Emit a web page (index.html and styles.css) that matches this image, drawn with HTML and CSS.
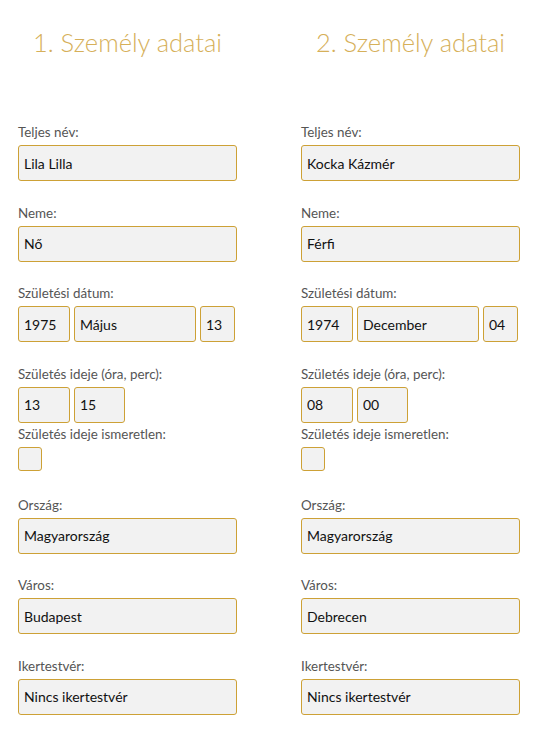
FILE: index.html
```html
<!DOCTYPE html>
<html lang="hu">
<head>
    <meta charset="UTF-8">
    <meta name="viewport" content="width=device-width, initial-scale=1.0">
    <title>Személy adatai</title>
    <link rel="stylesheet" href="styles.css">
</head>
<body>
    <div class="persons">
        <div class="person">
            <h2>1. Személy adatai</h2>

            <div class="field">
                <label>Teljes név:</label>
                <input type="text" value="Lila Lilla">
            </div>
            <div class="field">
                <label>Neme:</label>
                <input type="text" value="Nő">
            </div>
            <div class="field">
                <label>Születési dátum:</label>
                <div class="row">
                    <input type="text" class="year" value="1975">
                    <input type="text" class="month" value="Május">
                    <input type="text" class="day" value="13">
                </div>
            </div>
            <div class="field field-time">
                <label>Születés ideje (óra, perc):</label>
                <div class="row">
                    <input type="text" class="year" value="13">
                    <input type="text" class="minute" value="15">
                </div>
            </div>
            <div class="field field-check">
                <label>Születés ideje ismeretlen:</label>
                <span class="check"></span>
            </div>
            <div class="field">
                <label>Ország:</label>
                <input type="text" value="Magyarország">
            </div>
            <div class="field">
                <label>Város:</label>
                <input type="text" value="Budapest">
            </div>
            <div class="field">
                <label>Ikertestvér:</label>
                <input type="text" value="Nincs ikertestvér">
            </div>
        </div>

        <div class="person">
            <h2>2. Személy adatai</h2>

            <div class="field">
                <label>Teljes név:</label>
                <input type="text" value="Kocka Kázmér">
            </div>
            <div class="field">
                <label>Neme:</label>
                <input type="text" value="Férfi">
            </div>
            <div class="field">
                <label>Születési dátum:</label>
                <div class="row">
                    <input type="text" class="year" value="1974">
                    <input type="text" class="month" value="December">
                    <input type="text" class="day" value="04">
                </div>
            </div>
            <div class="field field-time">
                <label>Születés ideje (óra, perc):</label>
                <div class="row">
                    <input type="text" class="year" value="08">
                    <input type="text" class="minute" value="00">
                </div>
            </div>
            <div class="field field-check">
                <label>Születés ideje ismeretlen:</label>
                <span class="check"></span>
            </div>
            <div class="field">
                <label>Ország:</label>
                <input type="text" value="Magyarország">
            </div>
            <div class="field">
                <label>Város:</label>
                <input type="text" value="Debrecen">
            </div>
            <div class="field">
                <label>Ikertestvér:</label>
                <input type="text" value="Nincs ikertestvér">
            </div>
        </div>
    </div>
</body>
</html>
```

FILE: styles.css
```css
body {
    margin: 0;
    background-color: #fff;
    font-family: Lato, "Noto Sans", sans-serif;
    color: #222;
}

.persons {
    display: grid;
    grid-template-columns: 219px 219px;
    column-gap: 64px;
    padding-left: 18px;
}

.person h2 {
    margin: 27px 0 67px;
    font-size: 25.5px;
    line-height: 30px;
    font-weight: 300;
    text-align: center;
    color: #d6b05a;
}

.field {
    margin-bottom: 23.5px;
}

.field-time {
    margin-bottom: 3px;
}

.field-check {
    margin-bottom: 26px;
}

.field label {
    display: block;
    font-size: 13.4px;
    line-height: 16px;
    margin-bottom: 5px;
    color: #555;
}

.field input {
    display: block;
    width: 100%;
    height: 36px;
    box-sizing: border-box;
    padding: 0 5px;
    border: 1px solid #cda136;
    border-radius: 3px;
    background-color: #f2f2f2;
    font-family: inherit;
    font-size: 14px;
    color: #111;
}

.row {
    display: flex;
    gap: 4px;
}

.row .year {
    width: 52px;
}

.row .month {
    width: 122px;
}

.row .day {
    width: 35px;
}

.row .minute {
    width: 51px;
}

.check {
    display: block;
    width: 24px;
    height: 24px;
    box-sizing: border-box;
    margin-top: 1px;
    border: 1px solid #cda136;
    border-radius: 3px;
    background-color: #f2f2f2;
}
```
